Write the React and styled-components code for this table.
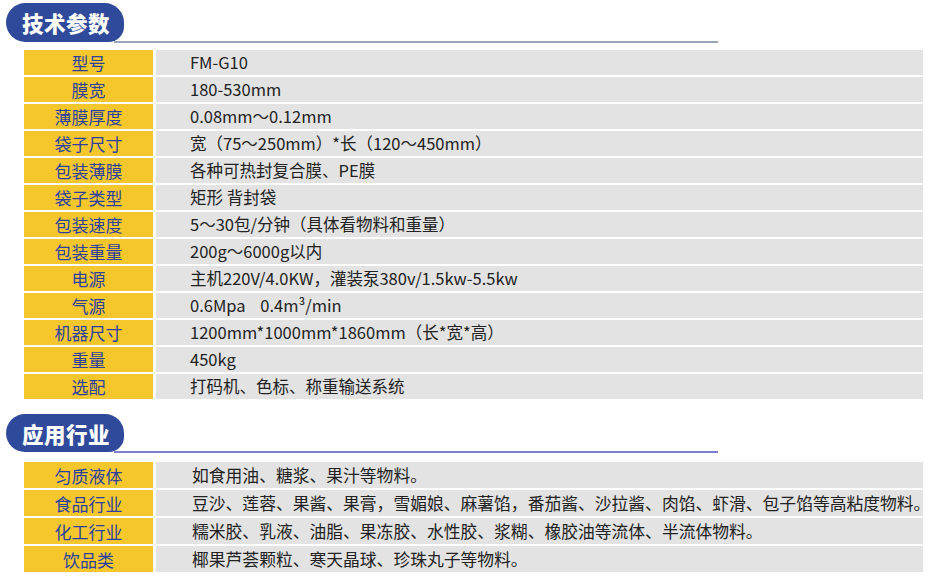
import React from "react";
import styled, { createGlobalStyle } from "styled-components";

const Global = createGlobalStyle`
  html, body { margin: 0; padding: 0; background: #ffffff; }
  body { font-family: "Noto Sans CJK SC", "Noto Sans", sans-serif; }
`;

const Page = styled.div`
  width: 930px;
  height: 585px;
  padding-top: 3px;
  box-sizing: border-box;
  overflow: hidden;
`;

const Header = styled.div`
  display: flex;
  align-items: flex-end;
  width: 712px;
  margin-left: 6px;
  margin-top: ${(p) => p.$top || 0}px;
`;

const Pill = styled.div`
  flex: none;
  width: 118px;
  height: ${(p) => p.$h}px;
  background: #2f4a9a;
  border-radius: 20px 20px 16px 20px;
  color: #ffffff;
  font-family: "Noto Sans CJK SC", sans-serif;
  font-weight: 900;
  font-size: 21.5px;
  letter-spacing: 0.5px;
  display: flex;
  align-items: center;
  padding-left: 16px;
  box-sizing: border-box;
`;

const Rule = styled.div`
  flex: 1;
  height: 2px;
  margin-left: -10px;
  margin-bottom: -1px;
  background: ${(p) => p.$color};
`;

const Table = styled.div`
  display: grid;
  grid-template-columns: 129px 767px;
  column-gap: 3px;
  row-gap: 2px;
  margin-left: 24px;
  margin-top: ${(p) => p.$top}px;
  grid-auto-rows: ${(p) => p.$rowH}px;
`;

const Label = styled.div`
  background: #f6c72c;
  color: #2c3fa0;
  font-size: 17px;
  display: flex;
  align-items: center;
  justify-content: center;
  line-height: 1;
`;

const Value = styled.div`
  background: #e3e3e3;
  color: #222222;
  font-size: ${(p) => p.$size}px;
  display: flex;
  align-items: center;
  padding-left: ${(p) => p.$pad}px;
  white-space: pre;
  line-height: 1;
`;

const specs = [
  ["型号", "FM-G10"],
  ["膜宽", "180-530mm"],
  ["薄膜厚度", "0.08mm～0.12mm"],
  ["袋子尺寸", "宽（75～250mm）*长（120～450mm）"],
  ["包装薄膜", "各种可热封复合膜、PE膜"],
  ["袋子类型", "矩形 背封袋"],
  ["包装速度", "5～30包/分钟（具体看物料和重量）"],
  ["包装重量", "200g～6000g以内"],
  ["电源", "主机220V/4.0KW，灌装泵380v/1.5kw-5.5kw"],
  ["气源", "0.6Mpa    0.4m³/min"],
  ["机器尺寸", "1200mm*1000mm*1860mm（长*宽*高）"],
  ["重量", "450kg"],
  ["选配", "打码机、色标、称重输送系统"],
];

const uses = [
  ["匀质液体", "如食用油、糖浆、果汁等物料。"],
  ["食品行业", "豆沙、莲蓉、果酱、果膏，雪媚娘、麻薯馅，番茄酱、沙拉酱、肉馅、虾滑、包子馅等高粘度物料。"],
  ["化工行业", "糯米胶、乳液、油脂、果冻胶、水性胶、浆糊、橡胶油等流体、半流体物料。"],
  ["饮品类", "椰果芦荟颗粒、寒天晶球、珍珠丸子等物料。"],
];

export default function App() {
  return (
    <Page>
      <Global />
      <Header>
        <Pill $h={39}>技术参数</Pill>
        <Rule $color="#9aa5b8" />
      </Header>
      <Table $top={8} $rowH={25}>
        {specs.map(([k, v]) => (
          <React.Fragment key={k}>
            <Label>{k}</Label>
            <Value $size={16.5} $pad={34}>{v}</Value>
          </React.Fragment>
        ))}
      </Table>
      <Header $top={15}>
        <Pill $h={38}>应用行业</Pill>
        <Rule $color="#7d80d0" />
      </Header>
      <Table $top={10} $rowH={26}>
        {uses.map(([k, v]) => (
          <React.Fragment key={k}>
            <Label>{k}</Label>
            <Value $size={16.8} $pad={36}>{v}</Value>
          </React.Fragment>
        ))}
      </Table>
    </Page>
  );
}
